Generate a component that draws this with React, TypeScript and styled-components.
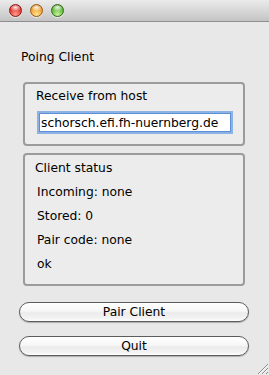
import React from 'react';
import styled, {createGlobalStyle} from 'styled-components';

const GlobalStyle = createGlobalStyle`
  html, body {
    margin: 0;
    padding: 0;
    background: #e8e8e8;
  }
  #root {
    width: 269px;
    height: 375px;
  }
`;

type Light = 'close' | 'minimize' | 'zoom';

const lightColors: Record<Light, [string, string, string]> = {
  close: ['#ff9a8f', '#e0392f', '#8c1a13'],
  minimize: ['#ffe39a', '#f0a02a', '#9a5a0c'],
  zoom: ['#c8f29a', '#5fb83a', '#2f6a17'],
};

const App = () => {
  return (
    <Window>
      <GlobalStyle />
      <TitleBar>
        <TrafficLight kind="close" />
        <TrafficLight kind="minimize" />
        <TrafficLight kind="zoom" />
      </TitleBar>
      <Content>
        <WindowLabel>Poing Client</WindowLabel>
        <GroupBox>
          <GroupTitle>Receive from host</GroupTitle>
          <HostInput defaultValue="schorsch.efi.fh-nuernberg.de" />
        </GroupBox>
        <GroupBox tight>
          <StatusLine>Client status</StatusLine>
          <StatusLine indent>Incoming: none</StatusLine>
          <StatusLine indent>Stored: 0</StatusLine>
          <StatusLine indent>Pair code: none</StatusLine>
          <StatusLine indent>ok</StatusLine>
        </GroupBox>
        <Buttons>
          <PushButton>Pair Client</PushButton>
          <PushButton>Quit</PushButton>
        </Buttons>
      </Content>
      <Grip width="11" height="11" viewBox="0 0 11 11">
        <path d="M1 11 L11 1 M5 11 L11 5 M9 11 L11 9" stroke="#8a8a8a" strokeWidth="1" />
        <path d="M2 11 L11 2 M6 11 L11 6" stroke="#ffffff" strokeWidth="0.8" />
      </Grip>
    </Window>
  );
};

export default App;

const Window = styled.div`
  position: relative;
  width: 269px;
  height: 375px;
  display: flex;
  flex-direction: column;
  background: #e8e8e8;
  font-family: 'DejaVu Sans', 'Liberation Sans', sans-serif;
  font-size: 12.3px;
  color: #000;
  overflow: hidden;
`;

const TitleBar = styled.div`
  height: 21px;
  flex: none;
  display: flex;
  align-items: center;
  gap: 8px;
  padding-left: 9px;
  background: linear-gradient(#ebebeb, #d4d4d4 60%, #c4c4c4);
  border-bottom: 1px solid #8e8e8e;
`;

const TrafficLight = styled.span<{kind: Light}>`
  width: 13px;
  height: 13px;
  border-radius: 50%;
  box-sizing: border-box;
  border: 1px solid ${(p) => lightColors[p.kind][2]};
  background: radial-gradient(
      ellipse 55% 35% at 50% 22%,
      rgba(255, 255, 255, 0.9),
      rgba(255, 255, 255, 0) 100%
    ),
    radial-gradient(
      circle at 50% 85%,
      ${(p) => lightColors[p.kind][0]} 0%,
      ${(p) => lightColors[p.kind][1]} 60%,
      ${(p) => lightColors[p.kind][2]} 110%
    );
  box-shadow: 0 1px 1px rgba(255, 255, 255, 0.6);
`;

const Content = styled.div`
  display: flex;
  flex-direction: column;
  padding: 27px 20px 0 19px;
`;

const WindowLabel = styled.div`
  line-height: 16px;
  margin-left: 2px;
  margin-bottom: 17px;
`;

const GroupBox = styled.div<{tight?: boolean}>`
  margin: 0 4px 7px;
  border: 2px solid #9b9b9b;
  border-radius: 4px;
  background: #ececec;
  padding: ${(p) => (p.tight ? '1px 0 8px 0' : '4px 0 12px 0')};
  display: flex;
  flex-direction: column;
`;

const GroupTitle = styled.div`
  line-height: 16px;
  padding-left: 11px;
  margin-bottom: 9px;
`;

const HostInput = styled.input`
  box-sizing: border-box;
  margin-left: 14px;
  width: 192px;
  height: 19px;
  padding: 0 0 0 1px;
  border: 1px solid #5b8fd6;
  outline: none;
  background: #fff;
  font-family: inherit;
  font-size: inherit;
  color: #000;
  box-shadow: 0 0 0 2px rgba(110, 160, 225, 0.75);
`;

const StatusLine = styled.div<{indent?: boolean}>`
  line-height: 24px;
  padding-left: ${(p) => (p.indent ? '12px' : '10px')};
`;

const Buttons = styled.div`
  display: flex;
  flex-direction: column;
  gap: 14px;
  margin-top: 9px;
`;

const PushButton = styled.button`
  height: 20px;
  box-sizing: border-box;
  border: 1px solid #5c5c5c;
  border-radius: 10px;
  padding: 0;
  font-family: inherit;
  font-size: inherit;
  line-height: 18px;
  color: #000;
  background: linear-gradient(#ffffff, #f7f7f7 45%, #ebebeb 55%, #f3f3f3 85%, #ffffff);
  box-shadow: 0 1px 1px rgba(0, 0, 0, 0.25);
`;

const Grip = styled.svg`
  position: absolute;
  right: 1px;
  bottom: 1px;
`;
